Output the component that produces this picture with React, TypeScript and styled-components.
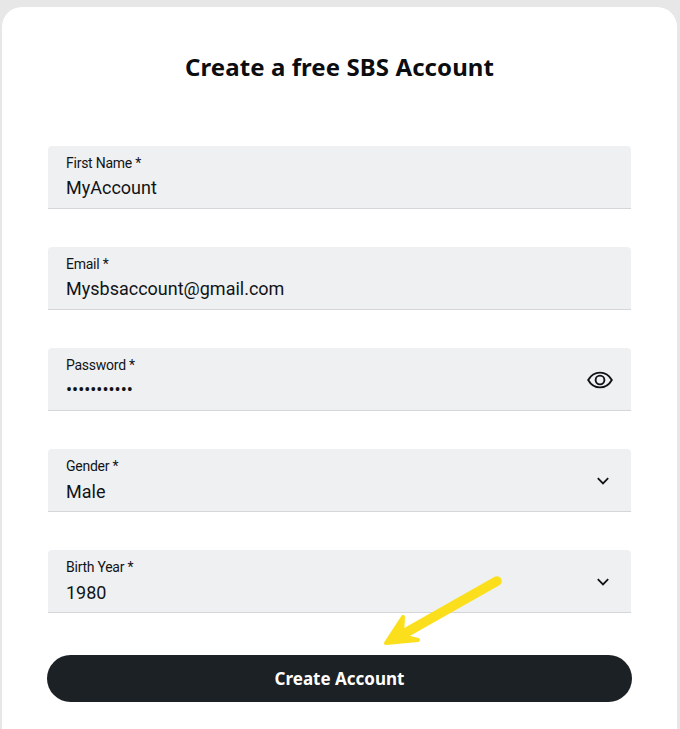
import React from "react";
import styled, { createGlobalStyle } from "styled-components";

const GlobalStyle = createGlobalStyle`
  html, body {
    margin: 0;
    padding: 0;
    background: #e7e7e8;
  }
`;

const Page = styled.div`
  width: 680px;
  height: 729px;
  overflow: hidden;
  padding: 7px 3px 0 2px;
  box-sizing: border-box;
`;

const Card = styled.div`
  position: relative;
  height: 722px;
  background: #fff;
  border-radius: 20px 20px 0 0;
  padding: 0 46px;
  box-sizing: border-box;
`;

const Title = styled.h1`
  margin: 0;
  height: 139px;
  padding-top: 43px;
  box-sizing: border-box;
  text-align: center;
  font-family: "Noto Sans", sans-serif;
  font-size: 24px;
  line-height: 34px;
  font-weight: 700;
  letter-spacing: 0.08px;
  color: #0b0d10;
`;

const Form = styled.div`
  display: flex;
  flex-direction: column;
  gap: 38px;
`;

const Field = styled.div`
  display: flex;
  align-items: center;
  justify-content: space-between;
  height: 63px;
  box-sizing: border-box;
  padding: 0 20px 0 18px;
  background: #eff0f2;
  border-bottom: 1px solid #d5d6d9;
  border-radius: 4px 4px 0 0;
`;

const FieldText = styled.div`
  display: flex;
  flex-direction: column;
  font-family: Roboto, sans-serif;
  color: #111417;
`;

const Label = styled.span`
  font-size: 14px;
  line-height: 18px;
  letter-spacing: -0.25px;
  margin-top: 1px;
`;

const Value = styled.span<{ $drop: number }>`
  font-size: 18px;
  line-height: 26px;
  margin-top: ${(p) => p.$drop}px;
`;

const IconBox = styled.span<{ $right: number; $top: number }>`
  display: flex;
  margin-right: ${(p) => p.$right}px;
  margin-top: ${(p) => p.$top}px;
  color: #111417;
`;

const SubmitButton = styled.button`
  display: block;
  width: 585px;
  height: 47px;
  margin: 42px 0 0 -1px;
  border: 0;
  border-radius: 24px;
  background: #1c2125;
  color: #fff;
  font-family: "Noto Sans", sans-serif;
  font-size: 17px;
  font-weight: 700;
`;

const ArrowOverlay = styled.svg`
  position: absolute;
  left: 368px;
  top: 563px;
`;

const EyeIcon = () => (
  <svg width="26" height="18" viewBox="0 0 26 18" fill="none" stroke="currentColor" strokeWidth="1.9">
    <path d="M1.2 9C3.8 4.3 8 1.6 13 1.6S22.2 4.3 24.8 9C22.2 13.7 18 16.4 13 16.4S3.8 13.7 1.2 9Z" />
    <circle cx="13" cy="9" r="4.4" />
  </svg>
);

const ChevronIcon = () => (
  <svg width="12" height="8" viewBox="0 0 12 8" fill="none" stroke="currentColor" strokeWidth="1.8">
    <path d="M0.8 1.2L6 6.4L11.2 1.2" />
  </svg>
);

const fields = [
  { label: "First Name *", value: "MyAccount", drop: 3 },
  { label: "Email *", value: "Mysbsaccount@gmail.com", drop: 3 },
  { label: "Password *", value: "•••••••••••", drop: 3, icon: "eye" },
  { label: "Gender *", value: "Male", drop: 4, icon: "chevron" },
  { label: "Birth Year *", value: "1980", drop: 4, icon: "chevron" },
];

export default function App() {
  return (
    <Page>
      <GlobalStyle />
      <Card>
        <Title>Create a free SBS Account</Title>
        <Form>
          {fields.map((f) => (
            <Field key={f.label}>
              <FieldText>
                <Label>{f.label}</Label>
                <Value $drop={f.drop}>{f.value}</Value>
              </FieldText>
              {f.icon === "eye" && (
                <IconBox $right={-2} $top={1}>
                  <EyeIcon />
                </IconBox>
              )}
              {f.icon === "chevron" && (
                <IconBox $right={2} $top={2}>
                  <ChevronIcon />
                </IconBox>
              )}
            </Field>
          ))}
        </Form>
        <SubmitButton>Create Account</SubmitButton>
        <ArrowOverlay width="140" height="90" viewBox="0 0 140 90" fill="none" stroke="#fcdf1c" strokeLinecap="round" strokeLinejoin="round">
          <path d="M127 11L30 66" strokeWidth="9.5" />
          <path d="M33 47L16 73L48 70L32 66Z" fill="#fcdf1c" strokeWidth="4" />
        </ArrowOverlay>
      </Card>
    </Page>
  );
}
